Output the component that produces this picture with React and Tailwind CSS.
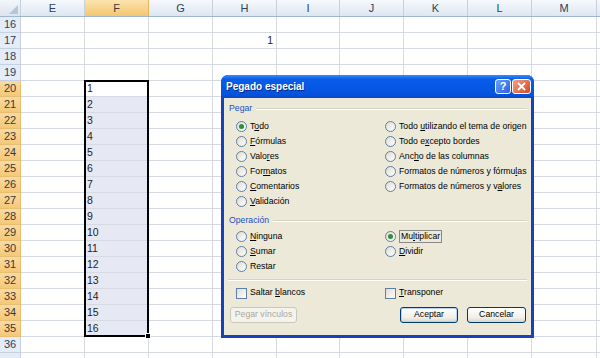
const COLS = [
  { id: 'E', w: 'w-[64px]' },
  { id: 'F', w: 'w-[64px]' },
  { id: 'G', w: 'w-[64px]' },
  { id: 'H', w: 'w-[64px]' },
  { id: 'I', w: 'w-[63px]' },
  { id: 'J', w: 'w-[64px]' },
  { id: 'K', w: 'w-[64px]' },
  { id: 'L', w: 'w-[64px]' },
  { id: 'M', w: 'w-[65px]' },
  { id: '', w: 'w-[60px]' },
];

const ROWS = Array.from({ length: 22 }, (_, i) => 16 + i);

function HeaderRow() {
  return (
    <div className="flex h-[17px] border-b border-[#9eb6ce]">
      <div className="relative w-[21px] shrink-0 border-r border-[#c5d1de] bg-[linear-gradient(#f3f6fb,#dbe4ef)]">
        <div className="absolute right-[2px] bottom-[2px] w-0 h-0 border-l-[9px] border-l-transparent border-b-[9px] border-b-[#b4c6da]" />
      </div>
      {COLS.map((c, i) => (
        <div
          key={i}
          className={`${c.w} shrink-0 flex items-center justify-center border-r text-[11px] ${
            c.id === 'F'
              ? 'bg-[linear-gradient(#fbe3b0,#f4c66e)] border-[#e8b560] text-[#3c3c3c]'
              : 'bg-[linear-gradient(#f6f9fc,#dde6f1)] border-[#c5d1de] text-[#2c4260]'
          }`}
        >
          {c.id}
        </div>
      ))}
    </div>
  );
}

function Row({ n }) {
  const sel = n >= 20 && n <= 35;
  return (
    <div className="flex h-[16px]">
      <div
        className={`w-[21px] shrink-0 flex items-center justify-center border-r border-b text-[11px] ${
          sel
            ? 'bg-[linear-gradient(#fadb9f,#f5c877)] border-[#e9bd72] text-[#3a3a3a]'
            : 'bg-[#e4ecf7] border-[#c5d1de] text-[#2c4260]'
        }`}
      >
        {n < 37 ? n : ''}
      </div>
      {COLS.map((c, i) => {
        const fill = c.id === 'F' && sel && n !== 20;
        let val = '';
        if (c.id === 'F' && sel) val = String(n - 19);
        if (c.id === 'H' && n === 17) val = '1';
        return (
          <div
            key={i}
            className={`${c.w} shrink-0 flex items-center border-r border-b border-[#d5dae3] text-[10.5px] text-[#1e1e1e] ${
              fill ? 'bg-[#e6e9f4]' : 'bg-white'
            } ${c.id === 'H' ? 'justify-end pr-[3px]' : 'pl-[2px]'}`}
          >
            {val}
          </div>
        );
      })}
    </div>
  );
}

function Lbl({ t, u }) {
  if (u < 0) return <span className="whitespace-nowrap">{t}</span>;
  return (
    <span className="whitespace-nowrap">
      {t.slice(0, u)}
      <span className="underline">{t[u]}</span>
      {t.slice(u + 1)}
    </span>
  );
}

function Radio({ t, u, checked, focus }) {
  return (
    <div className="h-[15px] flex items-center gap-[3px] whitespace-nowrap">
      <span className="w-[11px] h-[11px] shrink-0 rounded-full border border-[#5d7fa8] bg-[linear-gradient(135deg,#dedcd2,#ffffff)] flex items-center justify-center">
        {checked && <span className="w-[5px] h-[5px] rounded-full bg-[#2f8f3a]" />}
      </span>
      <span className={focus ? 'border border-[#8a8a8a] px-[1px] leading-[11px]' : ''}>
        <Lbl t={t} u={u} />
      </span>
    </div>
  );
}

function Check({ t, u }) {
  return (
    <div className="h-[14px] flex items-center gap-[3px]">
      <span className="w-[11px] h-[11px] shrink-0 border border-[#5d7fa8] bg-[linear-gradient(135deg,#dedcd2,#ffffff)]" />
      <Lbl t={t} u={u} />
    </div>
  );
}

function Group({ label }) {
  return (
    <div className="h-[14px] flex items-center gap-[4px] pl-[5px] pr-[4px]">
      <span className="text-[#1d4fc4]">{label}</span>
      <div className="flex-1 border-t border-[#d6d3c2] border-b-white border-b" />
    </div>
  );
}

function Btn({ children, w, primary, disabled }) {
  return (
    <div
      className={`${w} h-[16px] rounded-[3px] border flex items-center justify-center whitespace-nowrap ${
        disabled
          ? 'border-[#cac8bb] text-[#aca899] bg-[#f4f3ee]'
          : 'border-[#003c74] bg-[linear-gradient(#ffffff,#f0efe8_70%,#d8d5c8)]'
      } ${primary ? 'shadow-[inset_0_0_0_1px_#b9d1fa]' : ''}`}
    >
      {children}
    </div>
  );
}

function Dialog() {
  const pegar = [
    [{ t: 'Todo', u: 1, c: true }, { t: 'Todo utilizando el tema de origen', u: 5 }],
    [{ t: 'Fórmulas', u: 0 }, { t: 'Todo excepto bordes', u: 6 }],
    [{ t: 'Valores', u: 4 }, { t: 'Ancho de las columnas', u: 3 }],
    [{ t: 'Formatos', u: 3 }, { t: 'Formatos de números y fórmulas', u: 27 }],
    [{ t: 'Comentarios', u: 0 }, { t: 'Formatos de números y valores', u: 23 }],
    [{ t: 'Validación', u: 0 }, null],
  ];
  const oper = [
    [{ t: 'Ninguna', u: 0 }, { t: 'Multiplicar', u: 2, c: true, f: true }],
    [{ t: 'Sumar', u: 0 }, { t: 'Dividir', u: 0 }],
    [{ t: 'Restar', u: -1 }, null],
  ];
  const grid = (rows) => (
    <div className="grid grid-cols-[149px_1fr] pl-[12px]">
      {rows.flat().map((r, i) =>
        r ? <Radio key={i} t={r.t} u={r.u} checked={r.c} focus={r.f} /> : <div key={i} />
      )}
    </div>
  );
  return (
    <div className="absolute left-[221px] top-[75px] w-[313px] h-[263px] flex flex-col rounded-t-[7px] overflow-hidden bg-[#1742b8] font-['Liberation_Sans',Arial,sans-serif] text-[8.7px] text-black">
      <div className="h-[23px] shrink-0 flex items-center pl-[5px] pr-[3px] bg-[linear-gradient(#3d8cf7,#0a5de8_18%,#0558e6_50%,#0553dc_85%,#0a48c4)]">
        <span className="text-[10px] font-bold text-white [text-shadow:1px_1px_0_#0a2a8a]">Pegado especial</span>
        <div className="ml-auto flex gap-[1px]">
          <div className="w-[16px] h-[15px] rounded-[3px] border border-white bg-[linear-gradient(135deg,#6aa0fb,#2760e2)] flex items-center justify-center text-white text-[11px] font-bold">
            ?
          </div>
          <div className="w-[19px] h-[15px] rounded-[3px] border border-white bg-[linear-gradient(135deg,#f0a28a,#d2491e)] flex items-center justify-center">
            <svg width="9" height="9" viewBox="0 0 9 9">
              <path d="M1 1L8 8M8 1L1 8" stroke="white" strokeWidth="1.8" />
            </svg>
          </div>
        </div>
      </div>
      <div className="flex-1 mx-[3px] mb-[3px] bg-[#ece9d8] flex flex-col pt-[4px]">
        <Group label="Pegar" />
        <div className="mt-[3px]">{grid(pegar)}</div>
        <div className="mt-[5px]">
          <Group label="Operación" />
        </div>
        <div className="mt-[1px]">{grid(oper)}</div>
        <div className="mt-[5px] mx-[4px] border-t border-[#d6d3c2] border-b border-b-white" />
        <div className="mt-[5px] grid grid-cols-[149px_1fr] pl-[12px]">
          <Check t="Saltar blancos" u={7} />
          <Check t="Transponer" u={0} />
        </div>
        <div className="mt-[7px] flex items-center pl-[6px] pr-[5px]">
          <Btn w="w-[67px]" disabled>
            Pegar vínculos
          </Btn>
          <div className="ml-auto flex gap-[9px]">
            <Btn w="w-[58px]" primary>
              Aceptar
            </Btn>
            <Btn w="w-[59px]">Cancelar</Btn>
          </div>
        </div>
      </div>
    </div>
  );
}

export default function App() {
  return (
    <div className="relative w-[600px] h-[358px] overflow-hidden bg-white font-['Liberation_Sans',Arial,sans-serif]">
      <HeaderRow />
      {ROWS.map((n) => (
        <Row key={n} n={n} />
      ))}
      <div className="absolute left-[84px] top-[80px] w-[65px] h-[257px] border-2 border-black" />
      <div className="absolute left-[145px] top-[333px] w-[6px] h-[6px] bg-black border border-white" />
      <Dialog />
    </div>
  );
}
